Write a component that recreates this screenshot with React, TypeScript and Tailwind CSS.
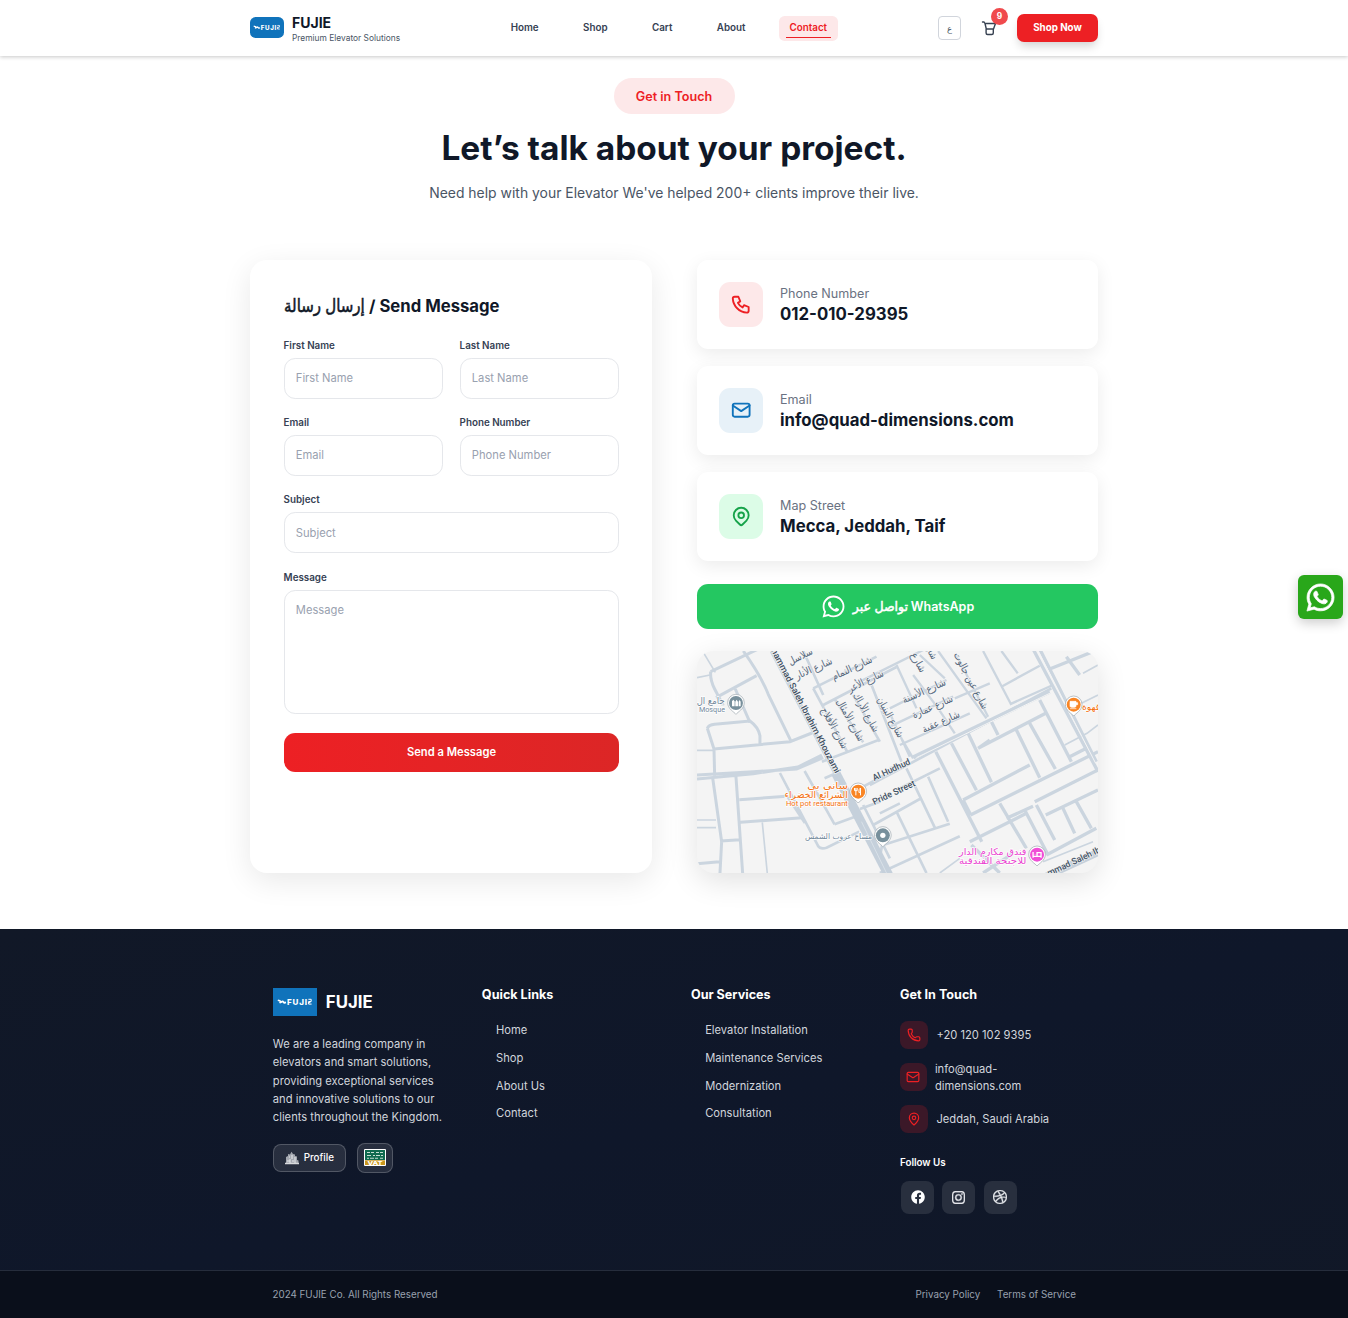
import React from "react";
import { TbPhone, TbMail, TbMapPin } from "react-icons/tb";
import { Phone, Mail, MapPin } from "lucide-react";
import { FaWhatsapp, FaFacebook } from "react-icons/fa";
import { BsInstagram, BsDribbble } from "react-icons/bs";

function Logo({ className }: { className: string }) {
  return (
    <svg viewBox="0 0 44 28" preserveAspectRatio="none" className={className}>
      <rect width="44" height="28" fill="#1073bb" />
      <path d="M4.800 12.300l2 .5 1.600 1.300 1.400-.8 1.400 1.600 1.800-.5M6.400 14.200l1.600.6" fill="none" stroke="#fff" strokeWidth="1.700" strokeLinejoin="round" />
      <text x="14" y="16.700" fontSize="8" fontWeight="800" fill="#fff" textLength="20" className="font-['Inter']">FUJI</text>
      <path d="M35.400 11.300h2.800v2.200h-2.600v2.600h3M35.400 14.600h2" fill="none" stroke="#fff" strokeWidth="1" />
    </svg>
  );
}

function CartIcon() {
  return (
    <svg viewBox="0 0 16 16" className="size-4" fill="none" stroke="#374151" strokeWidth="1.400" strokeLinecap="round" strokeLinejoin="round">
      <path d="M1.500 2h1.600l.9 1.500h10.500l-2 5.500H5.300M4 3.500 5.300 9M5.100 9v4a1.500 1.500 0 0 0 1.500 1.500h4.200a1.500 1.500 0 0 0 1.500-1.500V9" />
    </svg>
  );
}

const nav = ["Home", "Shop", "Cart", "About"];

function Header() {
  return (
    <header className="relative h-14 bg-white shadow-[0_1px_4px_rgba(0,0,0,0.22)]">
      <div className="mx-auto flex h-14 w-[848px] items-center justify-between">
        <div className="flex w-[239.400px] items-center gap-2">
          <Logo className="-mt-[2px] h-[21px] w-[34px] rounded-[5.600px]" />
          <div className="pt-[1px]">
            <div className="text-[14px] font-bold leading-[17px] text-gray-900">FUJIE</div>
            <div className="pt-px text-[8.400px] leading-[12px] text-gray-600">Premium Elevator Solutions</div>
          </div>
        </div>
        <nav className="flex items-center gap-[22.100px] text-[9.800px] font-semibold text-gray-700">
          {nav.map((n) => (
            <a key={n} className="px-[11.200px]">{n}</a>
          ))}
          <a className="relative flex h-[25px] items-center rounded-[5.600px] bg-[#fde8e9] px-[10.800px] text-[#ed2024]">
            Contact
            <span className="absolute inset-x-[7px] bottom-[3px] h-px bg-[#ed2024]" />
          </a>
        </nav>
        <div className="flex w-[250px] items-center justify-end">
          <div className="flex h-[24px] w-[23px] items-center justify-center rounded-[4px] border border-gray-300 pt-[2px] text-[8.400px] text-gray-600">ع</div>
          <div className="relative ml-[20px] mr-[20px]">
            <CartIcon />
            <span className="absolute -top-[12px] left-[10px] flex size-[17px] items-center justify-center rounded-full bg-[#f04a4d] text-[8.400px] font-bold text-white">9</span>
          </div>
          <button className="h-7 w-[81px] rounded-[7px] bg-[#ed2024] text-[9.800px] font-bold text-white shadow-[0_6px_10px_-2px_rgba(0,0,0,0.18)]">Shop Now</button>
        </div>
      </div>
    </header>
  );
}

function Field({ label, area, low }: { label: string; area?: boolean; low?: boolean }) {
  const box = "block w-full rounded-[11.200px] border border-gray-200 bg-white px-[10.800px] text-[11.200px] placeholder:text-gray-400 outline-none resize-none";
  return (
    <label className="block">
      <span className="-ml-[0.400px] block h-[19.600px] pt-[1px] text-[9.800px] font-semibold leading-[14px] text-gray-700">{label}</span>
      {area ? (
        <textarea placeholder={label} className={box + " h-[124px] py-[11px] leading-[16.800px]"} />
      ) : (
        <input placeholder={label} className={box + (low ? " h-[41px] pt-[2px]" : " h-[41px]")} />
      )}
    </label>
  );
}

function ContactForm() {
  return (
    <section className="rounded-[16.800px] bg-white pb-[33px] pl-[34px] pr-[33px] pt-[33.600px] shadow-[0_8px_30px_rgba(0,0,0,0.09)]">
      <h2 className="mb-[21px] flex h-[23.400px] items-center gap-[5px] pt-[2px] text-[16.700px] font-bold text-gray-900">
        <span className="w-[80px] whitespace-nowrap">
          <span className="inline-block origin-left scale-x-[0.9] scale-y-[1.08] font-normal [-webkit-text-stroke:0.5px_#111827]">إرسال رسالة</span>
        </span>
        <span>/ Send Message</span>
      </h2>
      <div className="grid grid-cols-2 gap-x-[17px] gap-y-[16.600px]">
        <Field label="First Name" />
        <Field label="Last Name" />
        <Field label="Email" />
        <Field label="Phone Number" />
        <div className="col-span-2"><Field label="Subject" low /></div>
        <div className="col-span-2 pt-[0.600px]"><Field label="Message" area /></div>
      </div>
      <button className="mt-[19px] h-[39px] w-full rounded-[11.200px] bg-linear-to-r from-[#ed2024] to-[#dc2626] text-[11.200px] font-semibold text-white">Send a Message</button>
    </section>
  );
}

const infos = [
  { label: "Phone Number", value: "012-010-29395", Icon: TbPhone, tone: "bg-[#fde8e9] text-[#ed2024]" },
  { label: "Email", value: "info@quad-dimensions.com", Icon: TbMail, tone: "bg-[#e7f1f8] text-[#1073bb]" },
  { label: "Map Street", value: "Mecca, Jeddah, Taif", Icon: TbMapPin, tone: "bg-[#dcfce7] text-[#16a34a]" },
];

function Pin({ x, y, color, children }: { x: number; y: number; color: string; children: React.ReactNode }) {
  return (
    <g transform={`translate(${x} ${y})`}>
      <path d="M0 34C-5 27-25 18-25-1a25 25 0 0 1 50 0C25 18 5 27 0 34Z" fill="#fff" stroke="#9aa5ac" strokeWidth="2" />
      <circle r="21" fill={color} />
      {children}
    </g>
  );
}

type Street = [string, number, number, number, number];

// text, centre x, centre y, angle, length
const streets: Street[] = [
  ["سلاسل", 332, 36, -27, 78],
  ["شارع الأنار", 372, 72, -24, 118],
  ["شارع النمام", 487, 71, -25, 130],
  ["شارع الأعر", 528, 110, -26, 116],
  ["شارع الأفلاج", 432, 250, 61, 136],
  ["شارع الأمثال", 480, 226, 61, 140],
  ["شارع الأراك", 527, 203, 61, 130],
  ["شارع البنيان", 600, 218, 61, 134],
  ["شارع ا", 680, 46, 62, 80],
  ["شار", 724, 24, 62, 40],
  ["شارع عين جالوت", 842, 108, 62, 188],
  ["شارع الأسنة", 703, 140, -24, 140],
  ["شارع عمارة", 729, 187, -24, 130],
  ["شارع عقبة", 754, 232, -24, 120],
];

function StreetMap() {
  return (
    <svg viewBox="21 18 1204 666" preserveAspectRatio="none" className="h-[222px] w-full rounded-[16.800px] bg-[#f4f4f4] shadow-[0_8px_30px_rgba(0,0,0,0.12)]">
      <g fill="none" stroke="#cbd5df" strokeWidth="9">
        <path d="M62 80 205 12M62 80Q60 104 74 132L100 182M78 158 200 92M160 18Q215 96 235 148L304 290M136 132 180 232" />
        <path d="M40 22 76 82M21 98 60 90M21 316H72M21 525H78M21 548H78M217 532 232 684" strokeWidth="5" />
        <path d="M52 250Q56 240 74 238L180 228Q205 246 210 272V296M52 250 72 312 M72 312 300 290 366 264M72 312 74 392" />
        <path d="M21 390 190 380 320 372 400 338M21 402 190 386 324 366 396 330M68 398 95 590 90 684M138 395 158 684M148 464 290 454M152 532 336 518M92 588 150 584M21 656 88 650" />
        <path d="M270 384 384 602Q392 614 410 608L508 560M344 378 434 538M434 538 510 510M292 454 345 534M340 18 400 150M400 180 620 66M370 130 560 35M370 130 474 324M396 350 566 285M436 165 520 292M545 120 635 350M490 150 570 290M404 400 440 384" strokeWidth="8" />
      </g>
      <g fill="none" stroke="#cbd5df" strokeWidth="10" transform="translate(600 0)">
        <path d="M-60 420 485 130M-90 430-20 393M-90 492-30 470M0 370 50 355M-80 480 0 640M-50 540 90 462M-20 580-30 640M-30 684 210 574M-20 600 180 536M20 500 110 684M50 370 135 548M20 435 150 370M115 395 175 530M30 475-30 505" strokeWidth="8" />
        <path d="M0 190 170 105M0 245 190 155M30 300 240 205M-90 110 130 0M20 255 70 340M20 60 80 190M70 90 145 190 195 265M145 18 290 220M200 30 295 215M280 18 365 180M335 18 384 85M335 125 450 62M360 178 490 120M90 30 165 100M195 160 300 115M0 205 60 335" strokeWidth="7" />
        <path d="M138 320 276 590M185 295 260 436M235 265 305 412M220 465 420 360M242 510 625 320M305 230 325 270M265 310 468 205M450 165 545 350M380 255 450 398M420 235 497 372M540 335 590 310M300 285 265 310M243 510 220 465M240 590 410 505M330 475 410 610M405 495 475 630M350 520 430 484M435 470 625 375M440 480 495 585M468 510 625 435M520 490 555 565M560 470 605 550M470 630 620 550M245 600 330 684M280 684 370 625M480 72 615 18M530 35 570 90" />
        <path d="M525 300 592 265 625 240M580 85 625 60M575 175 625 150M150 684 210 640M460 650 610 590" strokeWidth="5" />
        <path d="M430 12 625 380M450 12 620 350" strokeWidth="10" />
        <path d="M70 337 480 140" strokeWidth="12" />
        <path d="M80 338 484 143" stroke="#f4f4f4" strokeWidth="3" />
        <path d="M445 18 618 355" stroke="#f4f4f4" strokeWidth="3" />
      </g>
      <path d="M246 18 440 390" stroke="#cbd5df" strokeWidth="14" />
      <path d="M438 385 596 690" stroke="#c5d0db" strokeWidth="28" />
      <path d="M515 530 590 684" stroke="#d8e0e8" strokeWidth="3" />
      <path d="M1070 694 1225 622" stroke="#c5d0db" strokeWidth="22" />

      <g textAnchor="middle" fill="#52657a" stroke="#f4f4f4" strokeWidth="4" paintOrder="stroke" fontSize="31" className="font-['DejaVu_Sans']">
        {streets.map(([t, x, y, a, len]) => (
          <text key={t} transform={`translate(${x} ${y}) rotate(${a})`} textLength={len} lengthAdjust="spacingAndGlyphs" dy="8">{t}</text>
        ))}
      </g>
      <g fill="#3e5063" stroke="#f4f4f4" strokeWidth="4" paintOrder="stroke" fontSize="27" fontWeight="500" className="font-[Roboto]">
        <text transform="translate(243 16) rotate(62.500)" textLength="418" lengthAdjust="spacingAndGlyphs">hammad Saleh Ibrahim Khouzami</text>
        <text transform="translate(553 408) rotate(-25)" textLength="122" lengthAdjust="spacingAndGlyphs">Al Hudhud</text>
        <text transform="translate(553 480) rotate(-25)" textLength="138" lengthAdjust="spacingAndGlyphs">Pride Street</text>
        <text transform="translate(1078 694) rotate(-25)" textLength="182" lengthAdjust="spacingAndGlyphs">mmad Saleh Ibr</text>
      </g>
      <g stroke="#fff" strokeWidth="4" paintOrder="stroke" className="font-['DejaVu_Sans']">
        <g fill="#71879a" textAnchor="end">
          <text x="104" y="176" fontSize="28" textLength="84" lengthAdjust="spacingAndGlyphs">جامع ال</text>
          <text x="105" y="200" fontSize="22" className="font-[Roboto]" textLength="78" lengthAdjust="spacingAndGlyphs">Mosque</text>
          <text x="547" y="583" fontSize="24" textLength="202" lengthAdjust="spacingAndGlyphs">مساح عروب الشمس</text>
        </g>
        <g fill="#f5700f" textAnchor="end">
          <text x="474" y="432" fontSize="29" textLength="122" lengthAdjust="spacingAndGlyphs">ساني بي</text>
          <text x="474" y="459" fontSize="29" textLength="190" lengthAdjust="spacingAndGlyphs">الشرائع الخضراء</text>
          <text x="474" y="482" fontSize="22" className="font-[Roboto]" textLength="186" lengthAdjust="spacingAndGlyphs">Hot pot restaurant</text>
          <text x="1232" y="194" fontSize="28">قهوة</text>
        </g>
        <g fill="#ea3fd0" textAnchor="end">
          <text x="1010" y="630" fontSize="29" textLength="202" lengthAdjust="spacingAndGlyphs">فندق مكارم الدار</text>
          <text x="1010" y="658" fontSize="29" textLength="202" lengthAdjust="spacingAndGlyphs">للاجنحة الفندقية</text>
        </g>
      </g>
      <Pin x={138} y={174} color="#78909c"><path d="M-12 10V-5l4-5 4 5v15ZM-2 10V-4L2-10l4 6v14ZM8 10V-4l3-5 3 5v14Z" fill="#fff" /></Pin>
      <Pin x={505} y={440} color="#f98524"><path d="M-7-11v22M-11-11v8h8v-8M7 11v-22q-6 3-5 13h5" fill="none" stroke="#fff" strokeWidth="3" /></Pin>
      <Pin x={579} y={571} color="#78909c"><circle r="8" fill="#fff" /></Pin>
      <Pin x={1152} y={179} color="#f98524"><path d="M-11-10H7V4Q7 8 2 8h-8q-5 0-5-4ZM7-6h5v6H7M-11 12H8" fill="#fff" stroke="#fff" strokeWidth="2" /></Pin>
      <Pin x={1042} y={629} color="#f04fd6"><path d="M-12-8V9M-12 5H12V9M12 4V-6H0V4M-6-2v1" fill="none" stroke="#fff" strokeWidth="4" /></Pin>
    </svg>
  );
}

const linkCols = [
  { title: "Quick Links", links: ["Home", "Shop", "About Us", "Contact"] },
  { title: "Our Services", links: ["Elevator Installation", "Maintenance Services", "Modernization", "Consultation"] },
];

const reach = [
  { text: "+20 120 102 9395", Icon: Phone, wrap: false },
  { text: "info@quad-dimensions.com", Icon: Mail, wrap: true },
  { text: "Jeddah, Saudi Arabia", Icon: MapPin, wrap: false },
];

function Footer() {
  return (
    <footer className="mt-14 bg-linear-to-br from-[#111827] via-[#0f172a] to-[#111827] text-[#d1d5dc]">
      <div className="mx-auto grid h-[341px] w-[803px] grid-cols-4 content-start gap-[33.600px] pl-[0.300px] pt-[56px]">
        <div className="pt-[3px]">
          <div className="flex items-center gap-[9px]">
            <Logo className="h-7 w-[44px]" />
            <span className="pt-[1.500px] text-[16.800px] font-bold text-white">FUJIE</span>
          </div>
          <p className="mt-[19px] w-[175px] text-[11.200px] leading-[18.300px]">We are a leading company in elevators and smart solutions, providing exceptional services and innovative solutions to our clients throughout the Kingdom.</p>
          <div className="mt-[16.500px] flex items-center gap-[11px]">
            <div className="flex h-7 w-[73px] items-center justify-center gap-[5px] rounded-[8px] border border-white/20 bg-white/10 text-[9.800px] font-medium text-white">
              <svg viewBox="0 0 14 14" className="size-[14px]">
                <path d="M1 13V6l2-1V3l2 .5L6.500.8 8 3l2 .5V5l2 .5V9l1.500.5V13Z" fill="#a4a8b0" />
                <path d="M4 6h1M7 4v4M10 6v6M2 10h3M7 10h2M5 8v4" stroke="#e8eaed" strokeWidth="1" />
                <path d="M0 12.500h14" stroke="#d8dadd" strokeWidth="1.500" />
              </svg>
              Profile
            </div>
            <div className="flex h-[30px] w-[36px] items-center justify-center rounded-[8px] border border-white/20 bg-white/10">
              <svg viewBox="0 0 22 17" className="h-[17px] w-[22px]">
                <rect width="22" height="17" rx="1" fill="#fff" />
                <path d="M1 1h20v10H1Z" fill="#0f6b4f" />
                <path d="M1 11.300h20V16H1Z" fill="#c9971d" />
                <path d="M3 3.500h3m1 0h3m2 0h3m1 0h3M3 6.500h4m2 0h2m1 0h4m1 0h2M3 9.300h2m1 0h4m1 0h3m2 0h3" stroke="#c7e0d4" strokeWidth="1.100" />
                <text x="11" y="15.700" textAnchor="middle" fontSize="5.400" fontWeight="800" fill="#fff" textLength="15" lengthAdjust="spacingAndGlyphs">VAT</text>
              </svg>
            </div>
          </div>
        </div>
        {linkCols.map((c) => (
          <div key={c.title}>
            <h3 className="text-[12.600px] font-bold leading-[19.600px] text-white">{c.title}</h3>
            <ul className="mt-[17.500px] flex flex-col gap-[11.200px] pl-[14.200px] text-[11.200px] leading-[16.600px]">
              {c.links.map((l) => <li key={l}>{l}</li>)}
            </ul>
          </div>
        ))}
        <div>
          <h3 className="text-[12.600px] font-bold leading-[19.600px] text-white">Get In Touch</h3>
          <ul className="mt-[16px] flex flex-col gap-[14px] text-[11.200px] leading-[16.800px]">
            {reach.map(({ text, Icon, wrap }) => (
              <li key={text} className="flex h-7 items-center gap-[8.400px]">
                <span className={"flex h-7 shrink-0 items-center justify-center rounded-[8px] bg-[#3b1828] text-[#ed2024] " + (wrap ? "w-[26.500px]" : "w-7")}><Icon className="size-[14px]" /></span>
                <span className={wrap ? "w-[132px] pt-[2px]" : "w-[132px] pt-[1px]"}>{text}</span>
              </li>
            ))}
          </ul>
          <h4 className="mt-[23px] text-[9.800px] font-semibold leading-[14px] text-white">Follow Us</h4>
          <div className="mt-[11px] flex gap-[8.400px] pl-[1px] text-gray-200">
            {[FaFacebook, BsInstagram, BsDribbble].map((Icon, i) => (
              <span key={i} className="flex size-[33px] items-center justify-center rounded-[8px] bg-[#282f3e]">
                <Icon className={i === 0 ? "size-[14px] text-white" : i === 1 ? "size-[13px] stroke-[0.4px]" : "size-[14px] stroke-[0.4px]"} />
              </span>
            ))}
          </div>
        </div>
      </div>
      <div className="h-12 border-t border-[#262d3c] bg-[#0a0f1b]">
        <div className="mx-auto flex h-[47px] w-[804px] items-center justify-between pl-[0.500px] pt-[1px] text-[9.800px] text-[#99a1af]">
          <span>2024 FUJIE Co. All Rights Reserved</span>
          <span className="flex gap-[16.800px]"><span>Privacy Policy</span><span>Terms of Service</span></span>
        </div>
      </div>
    </footer>
  );
}

export default function App() {
  return (
    <div className="min-h-[1318px] overflow-hidden bg-white font-[Inter,'DejaVu_Sans',sans-serif]">
      <Header />
      <main className="mx-auto w-[848px]">
        <div className="flex h-[204px] flex-col items-center pt-[22px] text-center">
          <span className="flex h-9 w-[121px] items-center justify-center rounded-full bg-[#fde8e9] pt-[2px] text-[12.600px] font-semibold text-[#ed2024]">Get in Touch</span>
          <h1 className="mt-[13px] text-[33.450px] font-bold leading-[42px] text-gray-900">Let’s talk about your project.</h1>
          <p className="mt-[13px] text-[13.950px] leading-[22px] text-gray-600">Need help with your Elevator We've helped 200+ clients improve their live.</p>
        </div>
        <div className="grid h-[613px] grid-cols-[402px_401px] gap-[45px]">
          <ContactForm />
          <div>
            <div className="flex flex-col gap-[17px]">
              {infos.map(({ label, value, Icon, tone }) => (
                <div key={label} className="flex h-[89px] items-center gap-[17px] rounded-[11.200px] bg-white px-[22px] shadow-[0_5px_18px_rgba(0,0,0,0.08)]">
                  <span className={"flex h-[45px] w-[44px] items-center justify-center rounded-[11.200px] " + tone}><Icon className="size-[22.400px]" /></span>
                  <div>
                    <div className="text-[12.600px] leading-[19px] text-gray-500">{label}</div>
                    <div className="text-[16.800px] font-bold leading-[22px] text-gray-900">{value}</div>
                  </div>
                </div>
              ))}
            </div>
            <button className="mb-[22px] mt-[23px] flex h-[45px] w-full items-center justify-center gap-[7px] rounded-[11.200px] bg-[#24c761] text-[12.500px] font-semibold text-white">
              <FaWhatsapp className="size-[25px]" />
              <span className="flex items-center gap-[3px] pt-[1px]">
                <span className="w-[55px] whitespace-nowrap">
                  <span className="inline-block origin-left font-normal [-webkit-text-stroke:0.5px_#fff]">تواصل عبر</span>
                </span>
                <span>WhatsApp</span>
              </span>
            </button>
            <StreetMap />
          </div>
        </div>
      </main>
      <Footer />
      <a className="fixed right-[5px] top-[575px] flex h-[44px] w-[45px] items-center justify-center rounded-[6px] bg-[#29a71a] text-white shadow-[0_4px_12px_rgba(0,0,0,0.2)]">
        <FaWhatsapp className="size-[31px] stroke-current stroke-[12px]" />
      </a>
    </div>
  );
}
